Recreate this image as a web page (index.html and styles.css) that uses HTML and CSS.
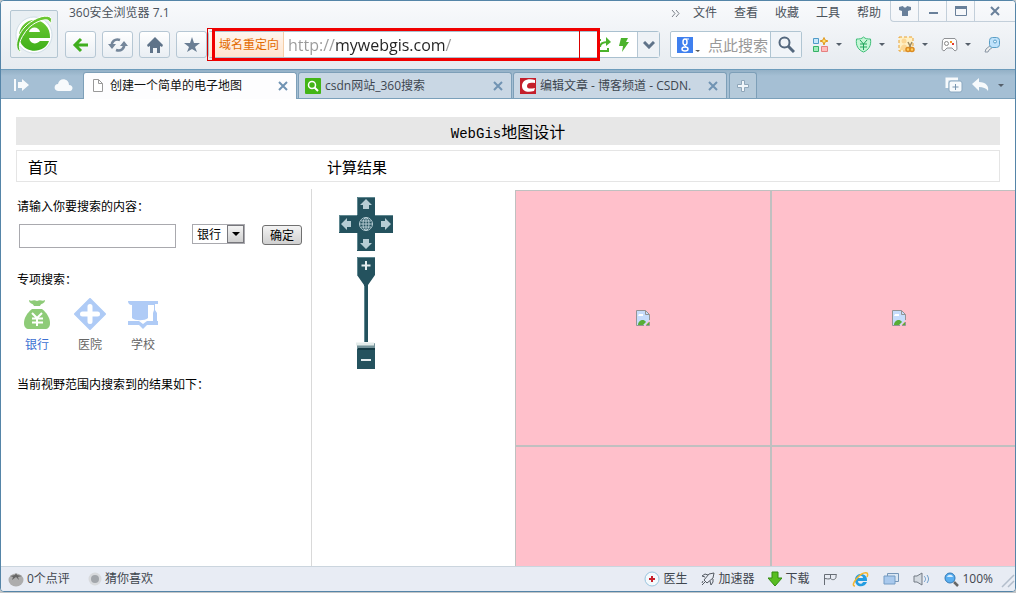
FILE: index.html
```html
<!DOCTYPE html>
<html lang="zh-CN">
<head>
<meta charset="utf-8">
<title>创建一个简单的电子地图</title>
<link rel="stylesheet" href="styles.css">
</head>
<body>
<div class="window">
  <header class="chrome">
    <button class="logo" aria-label="360">
      <svg width="42" height="42" viewBox="0 0 42 42">
        <defs><linearGradient id="lg" x1="0" y1="0" x2="0" y2="1"><stop offset="0" stop-color="#6cc832"/><stop offset="1" stop-color="#3fb01a"/></linearGradient></defs>
        <circle cx="21" cy="22" r="18" fill="#fff" stroke="#cfdde6" stroke-width="1"/>
        <path d="M37 25H16c1 6 7 7 11 3h9c-3 9-14 12-22 8C3 30 4 15 14 9c11-6 24 3 23 16ZM16 19h11c-1-6-10-6-11 0Z" fill="url(#lg)" fill-rule="evenodd"/>
        <path d="M8 39C1 37 3 24 11 15 19 6 31 1 37 4c2 1 2 4 0 7 0-3-2-5-6-4-8 1-16 7-20 14-5 7-6 14-3 18Z" fill="url(#lg)" stroke="#fff" stroke-width="1"/>
      </svg>
    </button>
    <div class="chrome-main">
      <div class="title-row">
        <span class="app-name">360安全浏览器 7.1</span>
        <nav class="menu">
          <button class="more" aria-label="更多"><svg width="9" height="9" viewBox="0 0 9 9"><path d="m1 1 3 3.500L1 8M5 1l3 3.500L5 8" fill="none" stroke="#7a8088"/></svg></button><button>文件</button><button>查看</button><button>收藏</button><button>工具</button><button>帮助</button>
        </nav>
        <div class="win-buttons">
          <button aria-label="皮肤"><svg width="14" height="12" viewBox="0 0 14 12"><path d="M1 2 5 1c1 2 3 2 4 0l4 1v3l-3 1v5H4V6L1 5Z" fill="#69809a"/></svg></button>
          <button aria-label="最小化"><svg width="12" height="12" viewBox="0 0 12 12"><path d="M2 8h9" stroke="#69809a" stroke-width="2"/></svg></button>
          <button aria-label="最大化"><svg width="12" height="12" viewBox="0 0 12 12"><path d="M.5 2v8.500h11V2" fill="none" stroke="#69809a"/><path d="M0 2.500h12" stroke="#69809a" stroke-width="3"/></svg></button>
          <button class="close" aria-label="关闭"><svg width="12" height="12" viewBox="0 0 12 12"><path d="m2 2 8 8m0-8-8 8" stroke="#69809a" stroke-width="2"/></svg></button>
        </div>
      </div>
      <div class="toolbar">
        <div class="nav-buttons">
          <button class="tool" aria-label="后退"><svg width="18" height="18" viewBox="0 0 18 18"><path d="M9 3 3 9l6 6M3 9h13" fill="none" stroke="#3fae1e" stroke-width="3"/></svg></button>
          <button class="tool" aria-label="刷新"><svg width="20" height="18" viewBox="0 0 20 18"><path d="M4 10C3 6 7 2 12 4M16 8c1 4-3 8-8 6" fill="none" stroke="#74869a" stroke-width="2.500"/><path d="m0 8 4 5 4-5ZM12 10h8l-4-5Z" fill="#74869a"/></svg></button>
          <button class="tool" aria-label="主页"><svg width="18" height="18" viewBox="0 0 18 18"><path d="m9 1 8 8-1 2-2-1v7h-3v-5H7v5H4v-7l-2 1-1-2Z" fill="#5f7389"/></svg></button>
          <button class="tool" aria-label="收藏"><svg width="18" height="18" viewBox="0 0 18 18"><path d="m9 1 2 6h6l-5 4 2 5-5-3-5 3 2-5-5-4h6Z" fill="#6a7e94"/></svg></button>
        </div>
        <div class="address">
          <span class="redirect">域名重定向</span>
          <input class="url" type="text" aria-label="地址" value="http://mywebgis.com/">
          <button class="addr-icon" aria-label="分享"><svg width="16" height="16" viewBox="0 0 16 16"><path d="M5 3H2v11h10v-3M4 10c0-4 3-5 8-5" fill="none" stroke="#4bb32c" stroke-width="2"/><path d="m10 0 5 5-5 4Z" fill="#4bb32c"/></svg></button>
          <button class="addr-icon" aria-label="加速"><svg width="12" height="16" viewBox="0 0 12 16"><path d="M3 1h7L8 5h3L4 15l1-6H1Z" fill="#4bb32c"/></svg></button>
          <button class="addr-drop" aria-label="展开"><svg width="12" height="8" viewBox="0 0 12 8"><path d="m1 1 5 5 5-5" fill="none" stroke="#5f7389" stroke-width="3"/></svg></button>
          <span class="mark mark-thin"></span>
          <span class="mark mark-thick"></span>
        </div>
        <div class="search">
          <button class="engine" aria-label="搜索引擎"><svg width="23" height="16" viewBox="0 0 23 16"><path d="M0 0h16v16H0Z" fill="#3f80ef"/><ellipse cx="8" cy="5" rx="2" ry="3" fill="none" stroke="#fff" stroke-width="1.5"/><ellipse cx="8" cy="12" rx="3" ry="2" fill="none" stroke="#fff" stroke-width="1.5"/><path d="M9 2h3M7 8l2 2" stroke="#fff"/><path d="M18 13h5l-2 2Z" fill="#555"/></svg></button>
          <input type="text" aria-label="搜索" placeholder="点此搜索">
          <button class="go" aria-label="搜索"><svg width="17" height="17" viewBox="0 0 17 17"><circle cx="6.500" cy="6.500" r="5" fill="none" stroke="#53677d" stroke-width="2"/><path d="m10 10 6 6" stroke="#53677d" stroke-width="3"/></svg></button>
        </div>
        <div class="extensions">
          <button aria-label="扩展"><svg width="17" height="17" viewBox="0 0 17 17"><path d="M1.500 2.500h5v5h-5Z" fill="#c8e8fb" stroke="#4f9bc9"/><path d="M1.500 10.500h5v5h-5Z" fill="#9fecbb" stroke="#36b167"/><path d="M9.500 10.500h6v5h-6Z" fill="#ffbcbc" stroke="#e58080"/><path d="m12 1.500 1 2.500 3 1-3 1-1 3-1-3-3-1 3-1Z" fill="#ffe26a" stroke="#e19a20"/></svg><i class="caret"></i></button>
          <button aria-label="网银"><svg width="17" height="17" viewBox="0 0 17 17"><path d="M8.500 1c2 2 4 2 7 2 1 7-2 11-7 13-5-2-8-6-7-13 3 0 5 0 7-2Z" fill="#c4f6d6" stroke="#3dbd77"/><path d="m5 4 3.500 4L12 4M8.500 8v6M5 8h7M5 11h7" fill="none" stroke="#21a55c"/></svg><i class="caret"></i></button>
          <button aria-label="截图"><svg width="17" height="17" viewBox="0 0 17 17"><path d="M1 1h14v14H1Z" fill="#fff0c5" stroke="#e8a132" stroke-dasharray="3 2"/><circle cx="6" cy="5" r="2.500" fill="#fbd795"/><path d="M2 14c1-7 7-7 8-1v1Z" fill="#fbd795"/><path d="m10 6 3 6m1-6-3 6" stroke="#9b8a66" stroke-width="1.500"/><circle cx="10" cy="13.500" r="2" fill="#ffd060" stroke="#dc8b22" stroke-width="1.500"/><circle cx="14" cy="13.500" r="2" fill="#ffd060" stroke="#dc8b22" stroke-width="1.500"/></svg><i class="caret"></i></button>
          <button aria-label="游戏"><svg width="17" height="17" viewBox="0 0 17 17"><path d="M3 2.500h11l1.500 2 .5 9-2 1.500-3-3H6l-3 3-2-1.500.5-9Z" fill="#fdfdfd" stroke="#8f9296"/><circle cx="5.500" cy="7.500" r="2" fill="none" stroke="#888"/><path d="M9 5h2v2H9Z" fill="#f29a1f"/><path d="M11 7h2v2h-2Z" fill="#e43a30"/></svg><i class="caret"></i></button>
          <button aria-label="登录管家"><svg width="17" height="17" viewBox="0 0 17 17"><path d="m7 9-5 4-1 3h3l1-2 4-3Z" fill="#eee" stroke="#8a97a5"/><rect x="5.500" y="1.500" width="10" height="10" rx="3" fill="#bfe2fb" stroke="#5b9fc6"/><circle cx="11" cy="5.500" r="1.500" fill="#e9f6ff" stroke="#5b9fc6"/></svg></button>
        </div>
      </div>
    </div>
  </header>

  <div class="tabs">
    <div class="strip-left">
      <button aria-label="侧边栏"><svg width="17" height="14" viewBox="0 0 17 14"><path d="M1 1h2v12H1ZM5 4h4V1l7 6-7 6v-3H5Z" fill="#f7fafc"/></svg></button>
      <button aria-label="云"><svg width="19" height="14" viewBox="0 0 19 14"><path d="M4 13c-5-1-4-7 0-7 1-7 11-6 11 1 5 0 4 6 1 6Z" fill="#f7fafc"/></svg></button>
    </div>
    <div class="tab active">
      <svg width="12" height="14" viewBox="0 0 12 14"><path d="M1.500.5h5l4 4v8h-9ZM6.500.5v4h4" fill="#fff" stroke="#999"/></svg>
      <a href="#">创建一个简单的电子地图</a>
      <button aria-label="关闭标签"><svg width="10" height="10" viewBox="0 0 10 10"><path d="m1 1 8 8m0-8-8 8" stroke="#7093b3" stroke-width="2"/></svg></button>
    </div>
    <div class="tab">
      <svg width="16" height="16" viewBox="0 0 16 16"><rect width="16" height="16" rx="1" fill="#43b516"/><circle cx="7" cy="7" r="3.500" fill="none" stroke="#fff" stroke-width="1.500"/><path d="m9.500 9.500 3.500 3.500" stroke="#fff" stroke-width="2"/></svg>
      <a href="#">csdn网站_360搜索</a>
      <button aria-label="关闭标签"><svg width="10" height="10" viewBox="0 0 10 10"><path d="m1 1 8 8m0-8-8 8" stroke="#7093b3" stroke-width="2"/></svg></button>
    </div>
    <div class="tab">
      <svg width="16" height="16" viewBox="0 0 16 16"><path d="M0 0h16v16H0Z" fill="#c41f2b"/><path d="M15 2C7 0 2 3 2 8s5 7 12 5l1-3c-5 1-8 1-8-2s3-4 8-3Z" fill="#fff"/></svg>
      <a href="#">编辑文章 - 博客频道 - CSDN.</a>
      <button aria-label="关闭标签"><svg width="10" height="10" viewBox="0 0 10 10"><path d="m1 1 8 8m0-8-8 8" stroke="#7093b3" stroke-width="2"/></svg></button>
    </div>
    <button class="add" aria-label="新标签"><svg width="14" height="14" viewBox="0 0 14 14"><path d="M5.500 1.500h3v4h4v3h-4v4h-3v-4h-4v-3h4Z" fill="#f1f6fa" stroke="#8fa6b9"/></svg></button>
    <div class="strip-right">
      <button aria-label="多标签"><svg width="18" height="16" viewBox="0 0 18 16"><path d="M2 11V2h11" fill="none" stroke="#f7fafc" stroke-width="3"/><rect x="4" y="4" width="13" height="11" rx="2" fill="#f7fafc" stroke="#8ba8c0"/><path d="M10.500 7v6M7.500 10h6" stroke="#7895af"/></svg></button>
      <button aria-label="撤销"><svg width="17" height="14" viewBox="0 0 17 14"><path d="m0 6 7-6v4c7 0 10 4 9 9-2-3-5-4-9-4v4Z" fill="#f7fafc"/></svg></button>
      <i class="caret"></i>
    </div>
  </div>

  <main class="page">
    <h1 class="banner"><span class="latin">WebGis</span>地图设计</h1>
    <nav class="site-nav"><a href="#">首页</a><a href="#">计算结果</a></nav>
    <div class="columns">
      <aside class="side">
        <form class="query">
          <label for="q">请输入你要搜索的内容：</label>
          <div class="query-row">
            <input id="q" type="text">
            <div class="picker">
              <select aria-label="类别"><option>银行</option><option>医院</option><option>学校</option></select>
              <span class="picker-arrow"><i class="caret"></i></span>
            </div>
            <button type="button">确定</button>
          </div>
        </form>
        <h2>专项搜索：</h2>
        <div class="kinds">
          <a href="#" class="kind current"><svg width="32" height="32" viewBox="0 0 32 32"><path d="M8 2c3 2 4-1 8 1 4-2 5 1 8-1 0 4-4 3-5 6h-6c-1-3-5-2-5-6Z" fill="#8ecb78"/><path d="M11 11h10c5 4 8 9 8 14 0 4-2 6-5 6H8c-3 0-5-2-5-6 0-5 3-10 8-14Z" fill="#8ecb78"/><path d="m11 15 5 5 5-5M16 20v8M11 20.500h11M11 24.500h11" fill="none" stroke="#fff" stroke-width="2"/></svg>银行</a>
          <a href="#" class="kind"><svg width="32" height="32" viewBox="0 0 32 32"><path d="m16 1 15 15-15 15L1 16Z" fill="#afcbf6" stroke="#afcbf6" stroke-width="2" stroke-linejoin="round"/><path d="M16 8.500v15M8.500 16h15" stroke="#fff" stroke-width="5" stroke-linecap="round"/></svg>医院</a>
          <a href="#" class="kind"><svg width="32" height="32" viewBox="0 0 32 32"><path d="M1 3h30v3h-3v6l2 3v8h-4v-8l1-3V7h-6v13c-3 3-13 3-16 0V7C2 7 1 5 1 3ZM1 23h11l4 3 4-3h11v4H20l-4 4-4-4H1Z" fill="#afcbf6"/></svg>学校</a>
        </div>
        <h2 class="results">当前视野范围内搜索到的结果如下：</h2>
      </aside>
      <section class="map" aria-label="地图">
        <div class="tiles">
          <div class="tile"><svg width="14" height="16" viewBox="0 0 14 16"><path d="M.5.5h9l4 4V10l-5 5.500h-8Z" fill="#c6dcfb"/><path d="M2 15c0-4 5-7 8-3l-3 3ZM10 15l3-3v3Z" fill="#58ad35"/><path d="M3 4h4v2H2Z" fill="#fff"/><path d="M8 15.500H.5V.5h9l4 4V10M13.500 12v3.500H10M9.500.5v4h4" fill="none" stroke="#949494"/></svg></div>
          <div class="tile"><svg width="14" height="16" viewBox="0 0 14 16"><path d="M.5.5h9l4 4V10l-5 5.500h-8Z" fill="#c6dcfb"/><path d="M2 15c0-4 5-7 8-3l-3 3ZM10 15l3-3v3Z" fill="#58ad35"/><path d="M3 4h4v2H2Z" fill="#fff"/><path d="M8 15.500H.5V.5h9l4 4V10M13.500 12v3.500H10M9.500.5v4h4" fill="none" stroke="#949494"/></svg></div>
          <div class="tile"></div>
          <div class="tile"></div>
        </div>
        <svg class="pan-zoom" width="54" height="174" viewBox="0 0 54 174">
          <path d="M18 1h18v18h18v18H36v18H18V37H0V19h18Z" fill="#24525e"/>
          <path d="M0 19.500h18M18.500 19V1.500H36M36 19.500h18M18.500 37v17M.5 19v17" fill="none" stroke="#5f8790"/>
          <path d="m27 3 6 6h-3v4h-6V9h-3ZM27 53l6-6h-3v-4h-6v4h-3ZM2 28l6-6v3h4v6H8v3ZM52 28l-6-6v3h-4v6h4v3Z" fill="#b7cdd4"/>
          <g fill="none" stroke="#b7cdd4"><circle cx="27" cy="28" r="6.500"/><ellipse cx="27" cy="28" rx="3" ry="6.500"/><path d="M20 28h14M27 21v14M22 25h10M22 31h10"/></g>
          <path d="M18 61h18v18l-7 10v57h-4V89l-7-10Z" fill="#24525e"/><path d="M18.500 79V61.500H36" fill="none" stroke="#5f8790"/><path d="M25.500 90v56" stroke="#5f8790"/>
          <path d="M27 65v9M22.500 69.500h9" stroke="#e4edef" stroke-width="2"/>
          <path d="M18 152h18v21H18Z" fill="#24525e"/><path d="M22 164h10" stroke="#e4edef" stroke-width="2"/>
          <rect x="18" y="147" width="18" height="6" rx="1" fill="#75939a"/><path d="M17 148h18" stroke="#e4eceb" stroke-width="3"/><path d="M19 153h17" stroke="#153b45" stroke-width="2"/>
        </svg>
      </section>
    </div>
  </main>

  <footer class="status">
    <a href="#"><svg width="16" height="16" viewBox="0 0 16 16"><ellipse cx="8" cy="9" rx="7.500" ry="6.500" fill="#adadad"/><path d="m2 5 5-1 1-2 1 2 5 1-4 1 1 3-3-3-4 3 1-3Z" fill="#656565"/></svg>0个点评</a>
    <a href="#" class="guess"><svg width="14" height="14" viewBox="0 0 14 14"><circle cx="7" cy="7" r="6.500" fill="#d8dadd"/><circle cx="7" cy="7" r="4" fill="#a2a6ab"/></svg>猜你喜欢</a>
    <div class="status-right">
      <a href="#"><svg width="16" height="16" viewBox="0 0 16 16"><circle cx="8" cy="8" r="7" fill="#f4f9fc" stroke="#9ac5df"/><path d="M8 5v6M5 8h6" stroke="#c8202a" stroke-width="2"/></svg>医生</a>
      <a href="#"><svg width="14" height="14" viewBox="0 0 14 14"><path d="m13 1-5 1-5 6 3 3 6-5ZM4 5 1 4l3-2 3 1M9 9l1 4 2-3V7M4 10l-3 3M2 9l-1 2" fill="none" stroke="#555b63"/></svg>加速器</a>
      <a href="#"><svg width="14" height="16" viewBox="0 0 14 16"><path d="M4 1h6v6h4l-7 8-7-8h4Z" fill="#58bd22" stroke="#338b10"/></svg>下载</a>
      <button aria-label="旗标"><svg width="15" height="14" viewBox="0 0 15 14"><path d="M1.500 13V2.500h12c-1 2 0 3-1 4-2 2-4 1-5 0-2 1-4 0-6 0M7.500 2.500v4" fill="none" stroke="#676d75"/></svg></button>
      <button aria-label="IE"><svg width="17" height="17" viewBox="0 0 17 17"><path d="M15 10H6c0 3 4 4 5 1h4c-2 6-12 6-12-2 0-8 13-8 12 1ZM6 7h5c0-3-5-3-5 0Z" fill="#259de0" fill-rule="evenodd"/><path d="M3 15c-6 0 6-15 12-13 1 1 1 2 0 4" fill="none" stroke="#f4b52d" stroke-width="1.500"/></svg></button>
      <button aria-label="窗口"><svg width="16" height="14" viewBox="0 0 16 14"><path d="M4.500 1.500h11v8h-11Z" fill="#dce8f4" stroke="#7596b8"/><path d="M1 4h11v8H1Z" fill="#a9c9ed" stroke="#759cc4"/></svg></button>
      <button aria-label="声音"><svg width="17" height="14" viewBox="0 0 17 14"><path d="M1 4h3l5-3v12l-5-3H1Z" fill="#d4dae1" stroke="#727a84"/><path d="M11 4c2 2 2 4 0 6M14 3c2 3 2 5 0 8" fill="none" stroke="#6b9bc8"/></svg></button>
      <a href="#" class="zoom"><svg width="15" height="15" viewBox="0 0 15 15"><circle cx="6" cy="6" r="5" fill="#5aaff1" stroke="#3279b6"/><path d="M3 5c1-3 5-3 6 0Z" fill="#d5edff"/><path d="m10 10 4 4" stroke="#666" stroke-width="2.500"/></svg>100%</a>
      <svg class="grip" width="14" height="14" viewBox="0 0 14 14"><path d="M1 13 13 1M7 13l6-6" stroke="#b3becb" stroke-width="1.500"/></svg>
    </div>
  </footer>
</div>
</body>
</html>
```
FILE: styles.css
```css
* { box-sizing: border-box; }
body {
  margin: 0;
  background: #c3c6c8;
  color: #000;
  font: 12px/18px "Open Sans", "Noto Sans CJK SC", sans-serif;
}
button, input, select { font: inherit; color: inherit; padding: 0; margin: 0; }
button {
  display: flex;
  align-items: center;
  justify-content: center;
  border: 0;
  background: none;
}
a { color: inherit; text-decoration: none; }
svg { flex: none; display: block; }
.caret {
  flex: none;
  border: 3px solid transparent;
  border-top-color: #555f6a;
  border-bottom: 0;
}
.window {
  display: flex;
  flex-direction: column;
  height: calc(100vh - 1px);
  border: 1px solid #5585a8;
  border-radius: 4px;
  overflow: hidden;
  background: #fff;
}

/* Browser chrome */
.chrome {
  display: flex;
  gap: 7px;
  height: 68px;
  padding-left: 9px;
  background: linear-gradient(#f9fafc, #e6ebf0);
  color: #4a525b;
}
.logo {
  width: 48px;
  height: 48px;
  margin-top: 9px;
  border: 1px solid #b4c6d2;
  border-radius: 2px;
  background: #e9eff3;
}
.chrome-main { flex: 1; min-width: 0; }
.title-row { display: flex; height: 30px; }
.app-name { padding: 3px 0 0 4px; }
.menu { display: flex; gap: 17px; height: 24px; margin-left: auto; }
.menu .more { margin-right: -4px; }
.win-buttons {
  display: flex;
  height: 21px;
  margin-left: 9px;
  border: 1px solid #c3cfda;
  border-width: 0 0 1px 1px;
  border-radius: 0 0 0 4px;
}
.win-buttons button { width: 28px; border-right: 1px solid #c3cfda; }
.win-buttons .close { width: 40px; border: 0; }
.toolbar { display: flex; height: 27px; padding-right: 14px; }
.nav-buttons { display: flex; gap: 6px; }
.tool {
  width: 31px;
  border: 1px solid #b6c7d4;
  border-radius: 3px;
  background: linear-gradient(#fff, #e9eef3);
}
.address {
  position: relative;
  display: flex;
  flex: 1;
  min-width: 0;
  margin-left: 1px;
  border: 1px solid #a9c0cf;
  border-radius: 3px;
  background: #fff;
}
.redirect {
  padding: 4px 4px 0 10px;
  background: linear-gradient(#fff6ee, #ffe6d0);
  border-right: 1px solid #f5cfa9;
  color: #e26a00;
  white-space: nowrap;
}
.url {
  flex: 1;
  min-width: 0;
  padding-left: 4px;
  border: 0;
  font-size: 16px;
  color: transparent;
  background: linear-gradient(90deg, #9a9a9a 51px, #222 51px, #222 161px, #9a9a9a 161px);
  -webkit-background-clip: text;
  background-clip: text;
}
.addr-icon { width: 20px; }
.addr-drop { width: 22px; margin-left: 3px; border-left: 1px solid #b6c7d4; background: #eef2f6; }
.mark { position: absolute; pointer-events: none; }
.mark-thin { top: -4px; bottom: -4px; left: -2px; right: 79px; border: 1px solid #d90000; }
.mark-thick { top: -4px; bottom: -4px; left: 3px; right: 59px; border: 3px solid #f00000; }
.search {
  display: flex;
  width: 132px;
  margin-left: 10px;
  border: 1px solid #b0c5d2;
  border-radius: 2px;
  background: #fff;
}
.search input { flex: 1; min-width: 0; padding: 0 0 0 8px; border: 0; font-size: 15px; background: none; }
.search input::placeholder { color: #999; opacity: 1; }
.engine { padding-left: 6px; }
.go { width: 31px; border-left: 1px solid #b0c5d2; background: #f0f4f8; }
.extensions { display: flex; gap: 13px; margin-left: 10px; }
.extensions button { gap: 7px; }

/* Tab strip */
.tabs {
  display: flex;
  height: 30px;
  padding: 2px 11px 0 0;
  border-top: 1px solid #6d9cbc;
  border-bottom: 1px solid #7ba0ba;
  background: linear-gradient(#93b0c6, #a5bfd4 6px);
  color: #3d4650;
}
.strip-left { display: flex; width: 82px; gap: 24px; padding-left: 12px; }
.tab {
  display: flex;
  align-items: center;
  gap: 4px;
  flex: 0 1 214px;
  min-width: 0;
  margin-right: 1px;
  padding: 0 8px 0 6px;
  border: 1px solid #7d9fb8;
  border-bottom: 0;
  border-radius: 3px 3px 0 0;
  background: #c9d7e4;
}
.tab a { flex: 1; min-width: 0; overflow: hidden; white-space: nowrap; }
.tab.active { gap: 6px; padding-left: 8px; margin-bottom: -1px; background: #fdfdfe; color: #111; }
.add { width: 28px; margin-left: 1px; border: 1px solid #7d9fb8; border-bottom: 0; border-radius: 3px 3px 0 0; background: #b5cada; }
.strip-right { display: flex; align-items: center; gap: 9px; margin-left: auto; }

/* Page */
.page { display: flex; flex-direction: column; flex: 1; min-height: 0; padding-top: 18px; font-family: "Noto Sans CJK SC", sans-serif; }
.banner {
  margin: 0 15px;
  background: #e7e7e7;
  font-size: 16px;
  font-weight: 400;
  line-height: 28px;
  text-align: center;
}
.latin { font: 14px/14px "Liberation Mono", monospace; }
.site-nav {
  display: grid;
  grid-template-columns: 299px 1fr;
  margin: 5px 15px 7px;
  padding: 2px 0 0 11px;
  border: 1px solid #e5e5e5;
  font-size: 15px;
  line-height: 28px;
}
.columns { display: flex; flex: 1; min-height: 0; }
.side { width: 311px; padding: 8px 0 0 16px; border-right: 1px solid #d9d9d9; }
.side label, .side h2 { display: block; margin: 0; font-size: 12px; font-weight: 400; line-height: 18px; }
.query-row { display: flex; align-items: flex-start; padding: 9px 0 0 2px; }
.query-row input { width: 157px; height: 24px; border: 1px solid #a9a9ae; }
.picker { position: relative; width: 53px; height: 20px; margin-left: 16px; }
.picker select { width: 53px; height: 20px; padding-left: 4px; border: 1px solid #a9a9ae; border-radius: 0; background: #fff; appearance: none; }
.picker-arrow {
  position: absolute;
  top: 1px;
  right: 1px;
  bottom: 1px;
  display: flex;
  width: 17px;
  align-items: center;
  justify-content: center;
  border: 1px solid #77777c;
  background: linear-gradient(#f4f4f4, #cfcfcf);
  pointer-events: none;
}
.picker-arrow .caret { border-width: 4px 4px 0; border-top-color: #000; }
.query-row button { width: 40px; height: 20px; margin: 1px 0 0 17px; border: 1px solid #707070; border-radius: 3px; background: linear-gradient(#f3f3f3, #d0d0d0); }
.query { padding-bottom: 22px; }
.kinds { display: flex; gap: 21px; padding: 10px 0 22px 4px; }
.kind { display: flex; flex-direction: column; align-items: center; gap: 5px; color: #666; }
.kind.current { color: #3c70d2; }
.map { position: relative; flex: 1; min-width: 0; padding: 1px 0 0 203px; overflow: hidden; }
.tiles { display: grid; grid-template-columns: 256px 256px; grid-auto-rows: 256px; }
.tile { display: flex; align-items: center; justify-content: center; border: 1px solid #c0c0c0; background: #ffc0cb; }
.pan-zoom { position: absolute; left: 27px; top: 7px; }

/* Status bar */
.status {
  display: flex;
  align-items: center;
  height: 25px;
  padding-left: 7px;
  border-top: 1px solid #cbd5de;
  background: #e8ecf4;
  color: #3f464e;
}
.status a { display: flex; align-items: center; gap: 3px; white-space: nowrap; }
.guess { margin-left: 18px; }
.status-right { display: flex; align-items: center; gap: 14px; margin-left: auto; }
.grip { align-self: flex-end; margin-left: -6px; }
```
